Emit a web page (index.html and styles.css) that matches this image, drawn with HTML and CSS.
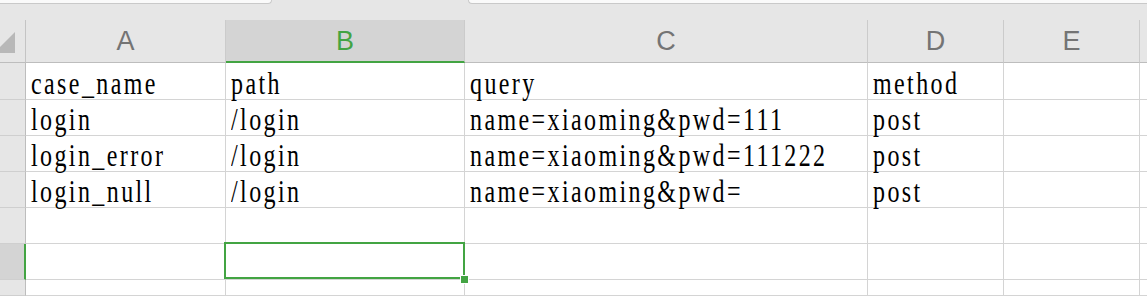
FILE: index.html
```html
<!DOCTYPE html>
<html>
<head>
<meta charset="utf-8">
<link rel="stylesheet" href="styles.css">
</head>
<body>
<div class="tabs">
  <div class="tab tab-left"></div>
  <div class="tab-gap"></div>
  <div class="tab tab-right"></div>
</div>
<div class="sheet">
  <div class="corner"><svg class="tri" width="16" height="40" viewBox="0 0 16 40"><polygon points="15,12 15,33 0,33 0,27" fill="#b8b8b8"/></svg></div>
  <div class="colhead">A</div>
  <div class="colhead sel">B</div>
  <div class="colhead">C</div>
  <div class="colhead">D</div>
  <div class="colhead">E</div>
  <div class="colhead last"></div>

  <div class="rowhead"></div>
  <div class="cell"><span class="t">case_name</span></div>
  <div class="cell"><span class="t">path</span></div>
  <div class="cell"><span class="t">query</span></div>
  <div class="cell"><span class="t">method</span></div>
  <div class="cell"></div>
  <div class="cell last"></div>

  <div class="rowhead"></div>
  <div class="cell"><span class="t">login</span></div>
  <div class="cell"><span class="t">/login</span></div>
  <div class="cell"><span class="t">name=xiaoming&amp;pwd=111</span></div>
  <div class="cell"><span class="t">post</span></div>
  <div class="cell"></div>
  <div class="cell last"></div>

  <div class="rowhead"></div>
  <div class="cell"><span class="t">login_error</span></div>
  <div class="cell"><span class="t">/login</span></div>
  <div class="cell"><span class="t">name=xiaoming&amp;pwd=111222</span></div>
  <div class="cell"><span class="t">post</span></div>
  <div class="cell"></div>
  <div class="cell last"></div>

  <div class="rowhead"></div>
  <div class="cell"><span class="t">login_null</span></div>
  <div class="cell"><span class="t">/login</span></div>
  <div class="cell"><span class="t">name=xiaoming&amp;pwd=</span></div>
  <div class="cell"><span class="t">post</span></div>
  <div class="cell"></div>
  <div class="cell last"></div>

  <div class="rowhead"></div>
  <div class="cell"></div>
  <div class="cell"></div>
  <div class="cell"></div>
  <div class="cell"></div>
  <div class="cell"></div>
  <div class="cell last"></div>

  <div class="rowhead sel"></div>
  <div class="cell"></div>
  <div class="cell active"><span class="handle"></span></div>
  <div class="cell"></div>
  <div class="cell"></div>
  <div class="cell"></div>
  <div class="cell last"></div>

  <div class="rowhead"></div>
  <div class="cell"></div>
  <div class="cell"></div>
  <div class="cell"></div>
  <div class="cell"></div>
  <div class="cell"></div>
  <div class="cell last"></div>
</div>
</body>
</html>
```
FILE: styles.css
```css
html, body {
  margin: 0;
  padding: 0;
  width: 1147px;
  height: 296px;
  overflow: hidden;
  background: #e6e6e6;
}

.tabs {
  display: flex;
  height: 20px;
  background: #e6e6e6;
}
.tab {
  height: 3px;
  background: #fafafa;
  border-bottom: 1px solid #c9c9c9;
}
.tab-left {
  width: 271px;
  border-right: 1px solid #c9c9c9;
  border-bottom-right-radius: 6px;
}
.tab-gap {
  width: 196px;
}
.tab-right {
  flex: 1;
  border-left: 1px solid #c9c9c9;
  border-bottom-left-radius: 6px;
}

.sheet {
  display: grid;
  grid-template-columns: 26px 200px 239px 403px 136px 136px 1fr;
  grid-template-rows: 43px 37px 36px 36px 36px 36px 36px 1fr;
  height: 276px;
  background: #ffffff;
}

.corner {
  background: #e6e6e6;
  border-right: 1px solid #c4c4c4;
  border-bottom: 1px solid #bdbdbd;
  overflow: hidden;
}
.tri {
  display: block;
}

.colhead {
  background: #e6e6e6;
  border-right: 1px solid #cbcbcb;
  border-bottom: 1px solid #bdbdbd;
  display: flex;
  align-items: center;
  justify-content: center;
  font-family: "Liberation Sans", Arial, sans-serif;
  font-size: 27px;
  color: #747474;
  padding-top: 1px;
}
.colhead.sel {
  background: #d4d4d4;
  color: #43a443;
  border-bottom: 2px solid #43a443;
}
.colhead.last {
  border-right: none;
}

.rowhead {
  background: #e6e6e6;
  border-right: 1px solid #bdbdbd;
  border-bottom: 1px solid #cfcfcf;
}
.rowhead.sel {
  background: #d4d4d4;
  border-right: 2px solid #43a443;
}

.cell {
  border-right: 1px solid #d4d4d4;
  border-bottom: 1px solid #d4d4d4;
  display: flex;
  align-items: flex-end;
  padding-left: 5px;
  padding-bottom: 1px;
  white-space: nowrap;
  min-width: 0;
}
.cell.last {
  border-right: none;
}

.t {
  display: inline-block;
  font-family: "Liberation Serif", "Times New Roman", serif;
  font-size: 24px;
  line-height: 24px;
  letter-spacing: 2.4px;
  color: #000;
  transform: scaleY(1.28);
  transform-origin: 0 20px;
}

.active {
  position: relative;
}
.active::after {
  content: "";
  position: absolute;
  left: -2px;
  top: -2px;
  width: 241px;
  height: 37px;
  box-sizing: border-box;
  border: 2px solid #43a443;
}
.handle {
  position: absolute;
  left: 235px;
  top: 32px;
  width: 7px;
  height: 7px;
  background: #43a443;
  box-shadow: 0 0 0 1px #ffffff;
  z-index: 2;
}
```
